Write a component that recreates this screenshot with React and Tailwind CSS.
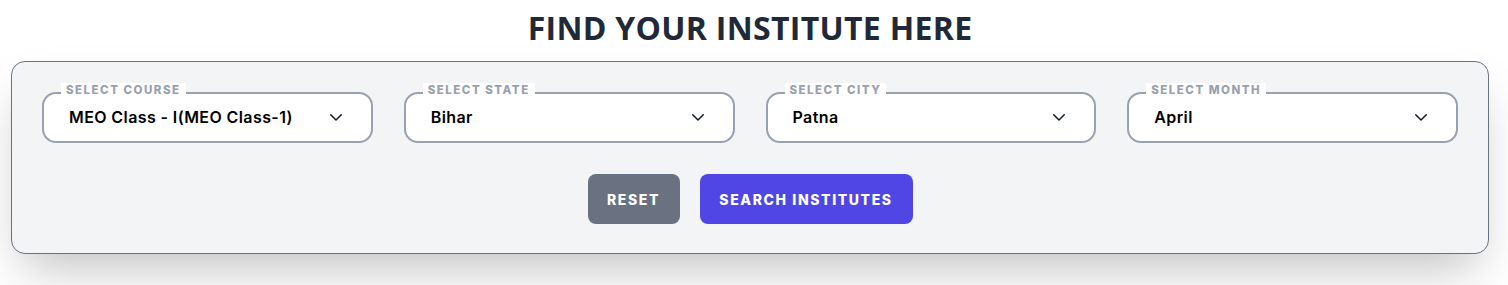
import React from "react"

const fields = [
    { label: "SELECT COURSE", value: "MEO Class - I(MEO Class-1)" },
    { label: "SELECT STATE", value: "Bihar" },
    { label: "SELECT CITY", value: "Patna" },
    { label: "SELECT MONTH", value: "April" },
]

function Chevron() {
    return (
        <svg width="18" height="18" viewBox="0 0 24 24" fill="none" stroke="#111827" strokeWidth="2" strokeLinecap="round" strokeLinejoin="round">
            <path d="M5 9l7 7 7-7" />
        </svg>
    )
}

function SelectField({ label, value }) {
    return (
        <div className="relative">
            <span className="absolute left-[19px] -top-[9px] bg-white px-[5px] text-[11.5px] font-extrabold tracking-[1.5px] leading-[14px] text-gray-400">
                {label}
            </span>
            <div className="flex h-[51px] items-center justify-between rounded-[14px] border-2 border-gray-400 bg-white pl-[25px] pr-[26px] pb-[2px]">
                <span className="text-[16px] font-semibold tracking-[0.4px] text-black">{value}</span>
                <Chevron />
            </div>
        </div>
    )
}

export default function App() {
    return (
        <div className="min-h-[285px] bg-white pt-[9px] font-['Inter',sans-serif]">
            <h1 className="w-[1478px] ml-[11px] text-center text-[32px] font-bold leading-[38px] text-[#1f2937] font-['Open_Sans',sans-serif] tracking-[0.3px]">
                FIND YOUR INSTITUTE HERE
            </h1>
            <div className="ml-[11px] mt-[14px] w-[1478px] rounded-[14px] border border-gray-500 bg-gray-100 px-[30px] pt-[30px] pb-[29px] shadow-2xl">
                <div className="grid grid-cols-4 gap-[31px]">
                    {fields.map((f) => (
                        <SelectField key={f.label} label={f.label} value={f.value} />
                    ))}
                </div>
                <div className="mt-[31px] flex justify-center gap-5">
                    <button className="h-[50px] w-[92px] rounded-lg bg-gray-500 text-[14px] font-extrabold tracking-[1.6px] text-white">
                        RESET
                    </button>
                    <button className="h-[50px] w-[213px] rounded-lg bg-[#4f46e5] text-[14px] font-extrabold tracking-[1.6px] text-white">
                        SEARCH INSTITUTES
                    </button>
                </div>
            </div>
        </div>
    )
}
